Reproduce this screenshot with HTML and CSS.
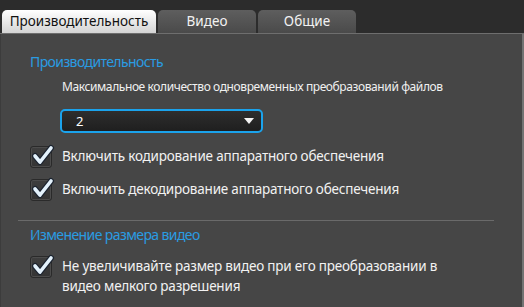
FILE: index.html
```html
<!DOCTYPE html>
<html lang="ru">
<head>
<meta charset="utf-8">
<link rel="stylesheet" href="styles.css">
</head>
<body>
<div class="window">
  <div class="tabbar">
    <div class="tab active">Производительность</div>
    <div class="tab">Видео</div>
    <div class="tab">Общие</div>
  </div>
  <div class="panel">
    <section class="group first">
      <h2 class="group-title">Производительность</h2>
      <div class="field-label">Максимальное количество одновременных преобразований файлов</div>
      <div class="select">
        <span class="select-value">2</span>
        <svg class="select-arrow" width="10" height="6" viewBox="0 0 10 6"><path d="M0 0 H10 L5 6 Z" fill="#f4f4f4"/></svg>
      </div>
      <div class="check">
        <span class="box"><svg width="26" height="24" viewBox="0 0 26 24"><path class="tick-outline" d="M5 12 L10 18 L21 4"/><path class="tick" d="M5 12 L10 18 L21 4"/></svg></span>
        <span class="check-text">Включить кодирование аппаратного обеспечения</span>
      </div>
      <div class="check">
        <span class="box"><svg width="26" height="24" viewBox="0 0 26 24"><path class="tick-outline" d="M5 12 L10 18 L21 4"/><path class="tick" d="M5 12 L10 18 L21 4"/></svg></span>
        <span class="check-text">Включить декодирование аппаратного обеспечения</span>
      </div>
    </section>
    <hr class="sep">
    <section class="group second">
      <h2 class="group-title">Изменение размера видео</h2>
      <div class="check multi">
        <span class="box"><svg width="26" height="24" viewBox="0 0 26 24"><path class="tick-outline" d="M5 12 L10 18 L21 4"/><path class="tick" d="M5 12 L10 18 L21 4"/></svg></span>
        <span class="check-text">Не увеличивайте размер видео при его преобразовании в видео мелкого разрешения</span>
      </div>
    </section>
  </div>
</div>
</body>
</html>
```
FILE: styles.css
```css
* { box-sizing: border-box; }
html, body { margin: 0; padding: 0; }
body {
  background: #2d2d2d;
  font-family: "Noto Sans", "Open Sans", sans-serif;
  color: #f0f0f0;
}
.window {
  width: 524px;
  height: 307px;
  display: flex;
  flex-direction: column;
  overflow: hidden;
}
.tabbar {
  height: 34px;
  flex: none;
  display: flex;
  align-items: flex-end;
  gap: 2px;
  padding-left: 2px;
  background: #2c2c2c;
  border-bottom: 1px solid #6e6e6e;
}
.tab {
  height: 23px;
  width: 98px;
  border-radius: 5px 5px 0 0;
  background: linear-gradient(#5e5e5e, #4a4a4a);
  color: #f2f2f2;
  font-size: 13.5px;
  line-height: 23px;
  text-align: center;
}
.tab.active {
  width: 154px;
  background: linear-gradient(#ffffff, #d4d4d4);
  color: #111;
}
.panel {
  flex: 1;
  background: #464646;
  border-right: 2px solid #737373;
  border-left: 1px solid #3c3c3c;
  padding: 0 0 0 17px;
}
.group {
  padding-left: 12px;
}
.group.first { padding-top: 18px; }
.group-title {
  margin: 0;
  font-weight: normal;
  font-size: 14px;
  letter-spacing: -0.6px;
  line-height: 20px;
  color: #2a9ce2;
}
.field-label {
  margin: 6px 0 0 32px;
  font-size: 12px;
  letter-spacing: -0.4px;
  line-height: 18px;
  color: #f0f0f0;
}
.select {
  margin: 13px 0 0 30px;
  width: 203px;
  height: 24px;
  border: 2px solid #1ba3ec;
  border-radius: 5px;
  background: linear-gradient(#2e2e2e, #1f1f1f);
  display: flex;
  align-items: center;
  justify-content: space-between;
  padding: 0 7px 0 14px;
}
.select-value {
  font-size: 13px;
  color: #fff;
}
.check {
  display: flex;
  align-items: flex-start;
  gap: 10px;
  margin-top: 13px;
}
.check + .check { margin-top: 11px; }
.box {
  flex: none;
  position: relative;
  width: 22px;
  height: 22px;
  border: 1px solid #2a2a2a;
  border-radius: 3px;
  background: linear-gradient(#3e3e3e, #343434);
  box-shadow: inset 0 0 0 1px #4c4c4c;
}
.box svg {
  position: absolute;
  left: -1px;
  top: -3px;
  overflow: visible;
}
.tick-outline {
  fill: none;
  stroke: #1c2430;
  stroke-width: 6;
  stroke-linecap: round;
  stroke-linejoin: round;
}
.tick {
  fill: none;
  stroke: #e4f2fc;
  stroke-width: 3.6;
  stroke-linecap: round;
  stroke-linejoin: round;
}
.check-text {
  font-size: 13.5px;
  letter-spacing: -0.2px;
  line-height: 20px;
  color: #f2f2f2;
  width: 400px;
}
.sep {
  margin: 19px 28px 0 0;
  border: 0;
  border-top: 1px solid #6a6a6a;
}
.group.second { padding-top: 4px; }
.group-title + .check { margin-top: 11px; }
.multi .check-text { width: 390px; }
```
